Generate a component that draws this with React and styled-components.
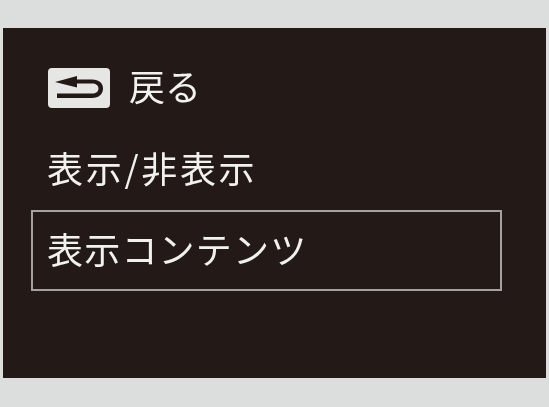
import React from "react";
import styled, { createGlobalStyle } from "styled-components";

const Global = createGlobalStyle`
  html, body { margin: 0; padding: 0; background: #dcdedd; }
  body { width: 549px; height: 407px; overflow: hidden; }
`;

const Page = styled.div`
  box-sizing: border-box;
  width: 549px;
  height: 407px;
  padding: 28px 3px 29px 3px;
  background: #dcdedd;
`;

const Panel = styled.div`
  box-sizing: border-box;
  height: 350px;
  padding: 33px 44px 0 27.5px;
  background: #231916;
  display: flex;
  flex-direction: column;
  filter: blur(0.35px);
`;

const Row = styled.div`
  box-sizing: border-box;
  display: flex;
  align-items: center;
  gap: ${(p) => p.$gap || 0}px;
  height: ${(p) => p.$height}px;
  margin-top: ${(p) => p.$top || 0}px;
  border: ${(p) => (p.$selected ? "2px solid #a3a2a0" : "none")};
  padding-left: ${(p) => (p.$selected ? 14.5 : 16.5)}px;
  padding-bottom: ${(p) => p.$lift || 0}px;
  font-family: "Noto Sans CJK JP", sans-serif;
  font-weight: 400;
  font-size: 36px;
  letter-spacing: ${(p) => p.$spacing || 0}px;
  color: #f1f1f0;
  white-space: nowrap;
`;

const BackKey = styled.svg`
  display: block;
  flex: none;
  width: 63px;
  height: 42px;
  margin-left: 1px;
  margin-top: ${(p) => p.$offset}px;
`;

export default function App() {
  return (
    <Page>
      <Global />
      <Panel>
        <Row $height={54} $gap={18} $lift={6}>
          <BackKey viewBox="0 0 63 42" $offset={6}>
            <rect x="0" y="1" width="62" height="40" rx="4" fill="#e6e6e5" />
            <path d="M7 15 L29 9 L29 12.5 L44 12.5 C51 12.5 55 16 55 21.5 C55 27 51 31 44 31 L9 31 L9 26.5 L44 26.5 C48 26.5 50.5 24.5 50.5 21.5 C50.5 18.5 48 16.5 44 16.5 L29 16.5 L29 20.5 Z" fill="#231916" />
          </BackKey>
          <span>戻る</span>
        </Row>
        <Row $height={54} $top={28} $lift={6} $spacing={2.7}>表示/非表示</Row>
        <Row $height={81} $top={13} $lift={6} $selected $spacing={1.2}>表示コンテンツ</Row>
      </Panel>
    </Page>
  );
}
